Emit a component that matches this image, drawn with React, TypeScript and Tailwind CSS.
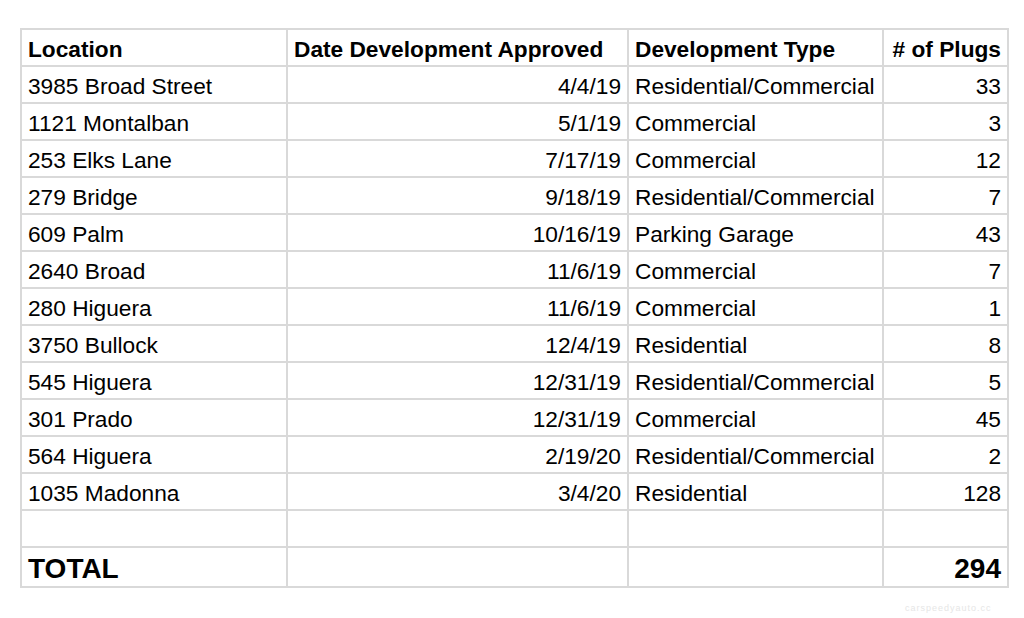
import React from "react";

type Row = {
    location: string;
    date: string;
    type: string;
    plugs: number;
};

const rows: Row[] = [
    { location: "3985 Broad Street", date: "4/4/19", type: "Residential/Commercial", plugs: 33 },
    { location: "1121 Montalban", date: "5/1/19", type: "Commercial", plugs: 3 },
    { location: "253 Elks Lane", date: "7/17/19", type: "Commercial", plugs: 12 },
    { location: "279 Bridge", date: "9/18/19", type: "Residential/Commercial", plugs: 7 },
    { location: "609 Palm", date: "10/16/19", type: "Parking Garage", plugs: 43 },
    { location: "2640 Broad", date: "11/6/19", type: "Commercial", plugs: 7 },
    { location: "280 Higuera", date: "11/6/19", type: "Commercial", plugs: 1 },
    { location: "3750 Bullock", date: "12/4/19", type: "Residential", plugs: 8 },
    { location: "545 Higuera", date: "12/31/19", type: "Residential/Commercial", plugs: 5 },
    { location: "301 Prado", date: "12/31/19", type: "Commercial", plugs: 45 },
    { location: "564 Higuera", date: "2/19/20", type: "Residential/Commercial", plugs: 2 },
    { location: "1035 Madonna", date: "3/4/20", type: "Residential", plugs: 128 },
];

const cell = "border-2 border-[#d9d9d9] px-[6px] pt-[3px] leading-none whitespace-nowrap";

export default function App() {
    const total = rows.reduce((sum, r) => sum + r.plugs, 0);

    return (
        <div
            className="relative w-[1024px] h-[618px] bg-white text-black overflow-hidden"
            style={{ fontFamily: '"Liberation Sans", Arial, sans-serif' }}
        >
            <table className="table-fixed border-collapse ml-[20px] mt-[28px] w-[987px] text-[22.7px]">
                <colgroup>
                    <col className="w-[266px]" />
                    <col className="w-[341px]" />
                    <col className="w-[255px]" />
                    <col className="w-[125px]" />
                </colgroup>

                <thead>
                    <tr className="h-[37px] font-bold">
                        <th className={`${cell} text-left`}>Location</th>
                        <th className={`${cell} text-left`}>Date Development Approved</th>
                        <th className={`${cell} text-left`}>Development Type</th>
                        <th className={`${cell} text-right`}># of Plugs</th>
                    </tr>
                </thead>

                <tbody>
                    {rows.map((r) => (
                        <tr key={r.location} className="h-[37px]">
                            <td className={`${cell} text-left`}>{r.location}</td>
                            <td className={`${cell} text-right`}>{r.date}</td>
                            <td className={`${cell} text-left`}>{r.type}</td>
                            <td className={`${cell} text-right`}>{r.plugs}</td>
                        </tr>
                    ))}

                    {/* blank spacer row */}
                    <tr className="h-[37px]">
                        <td className={cell}></td>
                        <td className={cell}></td>
                        <td className={cell}></td>
                        <td className={cell}></td>
                    </tr>

                    <tr className="h-[40px] font-bold text-[28px]">
                        <td className={`${cell} text-left`}>TOTAL</td>
                        <td className={cell}></td>
                        <td className={cell}></td>
                        <td className={`${cell} text-right`}>{total}</td>
                    </tr>
                </tbody>
            </table>

            {/* faint watermark */}
            <div className="absolute left-[905px] top-[602px] text-[9px] tracking-[1px] text-[#e6e6e6]">
                carspeedyauto.cc
            </div>
        </div>
    );
}
